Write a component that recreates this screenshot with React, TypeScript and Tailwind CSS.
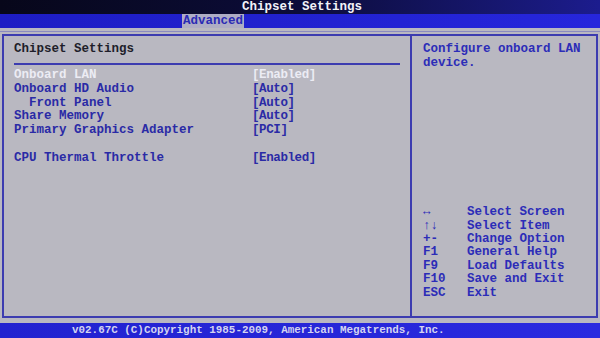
import React from "react";

const mono = { fontFamily: '"Liberation Mono", "DejaVu Sans Mono", monospace' };

const items: { label: string; value: string; indent?: boolean; selected?: boolean; gap?: boolean }[] = [
  { label: "Onboard LAN", value: "[Enabled]", selected: true },
  { label: "Onboard HD Audio", value: "[Auto]" },
  { label: "Front Panel", value: "[Auto]", indent: true },
  { label: "Share Memory", value: "[Auto]" },
  { label: "Primary Graphics Adapter", value: "[PCI]" },
  { label: "CPU Thermal Throttle", value: "[Enabled]", gap: true },
];

const help: [string, string][] = [
  ["↔", "Select Screen"],
  ["↑↓", "Select Item"],
  ["+-", "Change Option"],
  ["F1", "General Help"],
  ["F9", "Load Defaults"],
  ["F10", "Save and Exit"],
  ["ESC", "Exit"],
];

export default function App() {
  return (
    <div
      className="w-[600px] h-[338px] flex flex-col overflow-hidden font-bold text-[12.5px] bg-[#b9b8c1]"
      style={mono}
    >
      {/* title bar */}
      <div className="h-[14px] flex items-center justify-center bg-gradient-to-r from-[#07071a] via-[#0c0c3a] to-[#1c1c8e] text-[#f2f2f8] leading-[14px] pl-[4px]">
        Chipset Settings
      </div>
      {/* tab bar */}
      <div className="h-[14px] flex bg-gradient-to-r from-[#1d1dc4] to-[#2626dc] leading-[14px]">
        <div className="ml-[182px] px-[1px] bg-[#aeadc4] text-[#2a2ab4] text-[12.5px]">Advanced</div>
      </div>
      {/* body */}
      <div className="flex-1 flex flex-col pt-[3px] pb-[5px] px-[2px]">
        <div className="h-[1px] bg-[#8a8ac0] mx-[-2px] mb-[2px]" />
        <div className="flex-1 flex border-[2px] border-[#3c3cb0]">
          {/* left panel */}
          <div className="w-[408px] border-r-[2px] border-[#3c3cb0] flex flex-col pt-[7px]">
            <div className="pl-[10px] text-[#1e1e2a] leading-[13px]">Chipset Settings</div>
            <div className="h-[2px] bg-[#3c3cb0] ml-[10px] mr-[10px] mt-[7px] mb-[4px]" />
            <div className="flex flex-col">
              {items.map((it) => (
                <div
                  key={it.label}
                  className={`flex leading-[13.75px] ${it.gap ? "mt-[13.75px]" : ""} ${
                    it.selected ? "text-[#ececf4]" : "text-[#2a2aa6]"
                  }`}
                >
                  <div className={`w-[248px] ${it.indent ? "pl-[25px]" : "pl-[10px]"}`}>{it.label}</div>
                  <div className="tracking-[-0.4px]">{it.value}</div>
                </div>
              ))}
            </div>
          </div>
          {/* right panel */}
          <div className="flex-1 flex flex-col pt-[7px] pl-[11px] text-[#2c2cb8]">
            <div className="leading-[13.75px]">Configure onboard LAN</div>
            <div className="leading-[13.75px]">device.</div>
            <div className="flex flex-col mt-auto mb-[16px]">
              {help.map(([k, d]) => (
                <div key={d} className="flex leading-[13.4px]">
                  <div className="w-[44px]">{k}</div>
                  <div>{d}</div>
                </div>
              ))}
            </div>
          </div>
        </div>
      </div>
      {/* footer */}
      <div className="h-[15px] flex items-center bg-gradient-to-r from-[#2222d0] to-[#2a2ae0] text-[#d4d4f0] text-[10.9px] leading-[15px] pl-[72px]">
        v02.67C (C)Copyright 1985-2009, American Megatrends, Inc.
      </div>
    </div>
  );
}
